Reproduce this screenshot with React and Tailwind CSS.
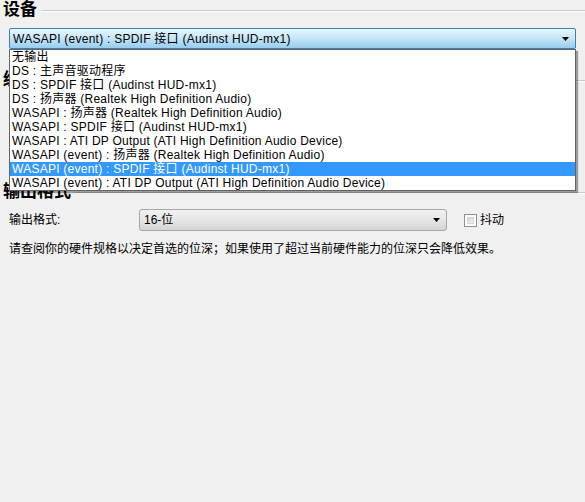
const devices = [
  '无输出',
  'DS : 主声音驱动程序',
  'DS : SPDIF 接口 (Audinst HUD-mx1)',
  'DS : 扬声器 (Realtek High Definition Audio)',
  'WASAPI : 扬声器 (Realtek High Definition Audio)',
  'WASAPI : SPDIF 接口 (Audinst HUD-mx1)',
  'WASAPI : ATI DP Output (ATI High Definition Audio Device)',
  'WASAPI (event) : 扬声器 (Realtek High Definition Audio)',
  'WASAPI (event) : SPDIF 接口 (Audinst HUD-mx1)',
  'WASAPI (event) : ATI DP Output (ATI High Definition Audio Device)',
]

const selected = 8

function Arrow() {
  return (
    <svg width="7" height="4" viewBox="0 0 7 4" className="shrink-0">
      <path d="M0 0h7L3.5 4z" fill="#000" />
    </svg>
  )
}

function SectionHeader({ title }) {
  return (
    <div className="flex items-center h-[20px]">
      <span className="pl-[3px] pr-[4px] text-[17px] leading-[20px] font-bold text-black">{title}</span>
      <div className="flex-1 h-[2px] border-t border-[#c9c9c9] border-b border-b-white mt-[1px]" />
    </div>
  )
}

export default function App() {
  return (
    <div
      className="relative w-[585px] h-[502px] bg-[#f0f0f0] overflow-hidden text-black"
      style={{ fontFamily: '"Liberation Sans", "Noto Sans CJK SC", sans-serif' }}
    >
      {/* 设备 */}
      <SectionHeader title="设备" />
      <div className="mt-[8px] ml-[9px] w-[567px] h-[21px] flex items-center justify-between pl-[3px] pr-[6px] rounded-[2px] border border-[#3c7fb1] bg-gradient-to-b from-[#eaf6fd] via-[#c4e5f8] to-[#98cdee] text-[12px] tracking-[0.25px]">
        <span>{devices[selected]}</span>
        <Arrow />
      </div>

      {/* 缓冲 — hidden under the open list */}
      <div className="mt-[21px]">
        <SectionHeader title="缓冲" />
        <div className="h-[92px]" />
      </div>

      {/* 输出格式 */}
      <SectionHeader title="输出格式" />
      <div className="mt-[7px] flex items-center h-[22px] pl-[9px] text-[12px]">
        <span className="w-[130px]">输出格式:</span>
        <div className="w-[308px] h-[22px] flex items-center justify-between pl-[4px] pr-[6px] rounded-[3px] border border-[#a7a7a7] bg-gradient-to-b from-[#f2f2f2] via-[#e6e6e6] to-[#d4d4d4]">
          <span>16-位</span>
          <Arrow />
        </div>
        <div className="ml-[17px] w-[13px] h-[13px] border border-[#8e8f8f] bg-white p-[2px]">
          <div className="w-full h-full bg-gradient-to-br from-[#cbcfd5] to-[#f6f6f6] border border-[#d4d6d9]" />
        </div>
        <span className="ml-[3px]">抖动</span>
      </div>
      <p className="mt-[10px] pl-[9px] text-[12px] leading-[16px]">
        请查阅你的硬件规格以决定首选的位深；如果使用了超过当前硬件能力的位深只会降低效果。
      </p>

      {/* open dropdown list */}
      <div className="absolute top-[49px] left-[9px] w-[567px] h-[142px] bg-white border border-[#646464] shadow-[2px_2px_1px_rgba(0,0,0,0.35)] text-[12px] tracking-[0.25px]">
        {devices.map((d, i) => (
          <div
            key={i}
            className={`h-[14px] leading-[14px] pl-[2px] whitespace-nowrap ${
              i === selected ? 'bg-[#3399ff] text-white' : ''
            }`}
          >
            {d}
          </div>
        ))}
      </div>
    </div>
  )
}
